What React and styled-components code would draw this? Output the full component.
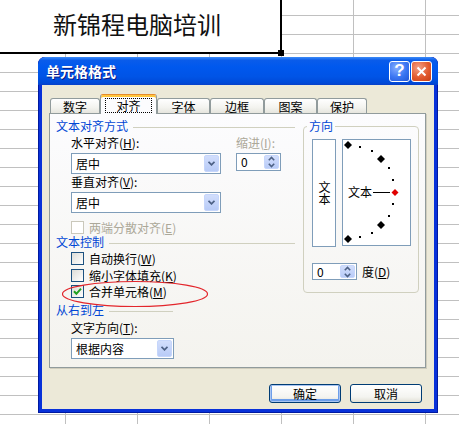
import React from 'react';
import styled, { createGlobalStyle, css } from 'styled-components';

// Page + spreadsheet background
const GlobalStyle = createGlobalStyle`
  html, body {
    margin: 0;
    padding: 0;
  }
  body {
    width: 459px;
    height: 424px;
    overflow: hidden;
    background: #fff;
    font-family: "Noto Sans CJK SC", "Liberation Sans", sans-serif;
  }
`;

const Sheet = styled.div`
  position: relative;
  width: 459px;
  height: 424px;
  overflow: hidden;
  background-color: #fff;
  background-image:
    linear-gradient(to right, transparent 65px, #c0c0c0 65px, #c0c0c0 66px, transparent 66px),
    linear-gradient(to bottom, transparent 15px, #c0c0c0 15px, #c0c0c0 16px, transparent 16px);
  background-size: 72px 100%, 100% 19px;
`;

const MergedCell = styled.div`
  position: relative;
  width: 280px;
  height: 52px;
  box-sizing: content-box;
  padding: 0;
  background: #fff;
  border-right: 2px solid #000;
  border-bottom: 2px solid #000;
  display: flex;
  align-items: center;
  justify-content: center;
  font-size: 24px;
  line-height: 28px;
  color: #111;
  span {
    margin: 0 6px 4px 0;
  }
`;

const FillHandle = styled.i`
  position: absolute;
  right: -4px;
  bottom: -4px;
  width: 6px;
  height: 6px;
  background: #000;
`;

// Window chrome
const Window = styled.div`
  position: absolute;
  left: 38px;
  top: 57px;
  width: 400px;
  height: 356px;
  display: flex;
  flex-direction: column;
  background: #0831d9;
  border-radius: 7px 7px 0 0;
  box-shadow: inset 1px 0 #0019a0, inset -1px 0 #0019a0, inset 0 -1px #0019a0;
  overflow: hidden;
`;

const TitleBar = styled.div`
  height: 28px;
  flex: none;
  display: flex;
  align-items: center;
  gap: 1px;
  padding: 0 6px 0 8px;
  border-radius: 7px 7px 0 0;
  background: linear-gradient(
    to bottom,
    #3d8cf7 0%,
    #0a5cea 12%,
    #0058ee 35%,
    #0054e6 70%,
    #004ad8 92%,
    #0840c8 100%
  );
`;

const Title = styled.div`
  flex: 1;
  color: #fff;
  font-size: 14px;
  font-weight: 700;
  line-height: 18px;
  text-shadow: 1px 1px 0 #0a1883;
`;

const CapButton = styled.span`
  width: 21px;
  height: 21px;
  box-sizing: border-box;
  border: 1px solid #fff;
  border-radius: 3px;
  display: flex;
  align-items: center;
  justify-content: center;
  color: #fff;
  font: 700 17px "Liberation Sans", sans-serif;
  background: ${(p) =>
    p.$close
      ? 'radial-gradient(circle at 35% 30%, #f2a087, #e25a2f 55%, #c63d14)'
      : 'radial-gradient(circle at 35% 30%, #86aeff, #3a75f2 55%, #2356d6)'};
`;

const Body = styled.div`
  flex: 1;
  margin: 0 4px 4px;
  padding: 9px 8px 0 7px;
  background: #ece9d8;
  display: flex;
  flex-direction: column;
`;

// Tabs
const TabList = styled.div`
  position: relative;
  z-index: 1;
  display: flex;
  align-items: flex-end;
  height: 19px;
  margin-left: 1px;
`;

const Tab = styled.div`
  box-sizing: border-box;
  width: ${(p) => p.$w}px;
  height: 15px;
  display: flex;
  align-items: center;
  justify-content: center;
  font-size: 12px;
  line-height: 13px;
  color: #000;
  border: 1px solid #919b9c;
  border-bottom: none;
  border-radius: 3px 3px 0 0;
  background: linear-gradient(#fff, #f3f3ef 60%, #e6e5de);
  ${(p) =>
    p.$active &&
    css`
      height: 20px;
      margin-bottom: -1px;
      padding-top: 2px;
      border-top: 1px solid #e68b2c;
      box-shadow: inset 0 2px 0 #ffc73c;
      background: #fcfcfe;
    `}
`;

const FocusText = styled.span`
  padding: 0 10px;
  border: 1px dotted #000;
  line-height: 13px;
`;

const Panel = styled.div`
  position: relative;
  height: 255px;
  box-sizing: border-box;
  border: 1px solid #919b9c;
  box-shadow: 1px 1px 0 #d0cdbd;
  background: linear-gradient(#fcfcfe, #f4f3ee);
  display: flex;
  gap: 8px;
  padding: 5px 6px 0 6px;
`;

const LeftCol = styled.div`
  width: 239px;
  display: flex;
  flex-direction: column;
`;

const GroupHeader = styled.div`
  display: flex;
  align-items: center;
  height: 14px;
  width: ${(p) => (p.$width ? `${p.$width}px` : 'auto')};
  margin-top: ${(p) => p.$mt || 0}px;
  color: #0046d5;
  font-size: 12px;
  line-height: 14px;
  &::after {
    content: '';
    flex: 1;
    height: 1px;
    margin: 2px 0 0 5px;
    background: #d0d0bf;
  }
`;

const Indent = styled.div`
  padding-left: 15px;
  display: flex;
  flex-direction: ${(p) => (p.$row ? 'row' : 'column')};
  margin-top: ${(p) => p.$mt || 0}px;
`;

const FieldCol = styled.div`
  width: ${(p) => p.$w}px;
  margin-left: ${(p) => p.$ml || 0}px;
  display: flex;
  flex-direction: column;
  align-items: flex-start;
`;

const Label = styled.div`
  height: 14px;
  font-size: 12px;
  line-height: 14px;
  color: ${(p) => (p.$disabled ? '#aca899' : '#000')};
  margin-top: ${(p) => p.$mt || 0}px;
  white-space: nowrap;
`;

const Combo = styled.div`
  box-sizing: border-box;
  width: ${(p) => p.$w}px;
  height: 21px;
  margin-top: 3px;
  border: 1px solid #7f9db9;
  background: #fff;
  display: flex;
  align-items: center;
  padding: 1px 1px 1px 4px;
  font-size: 12px;
`;

const ComboText = styled.span`
  flex: 1;
  line-height: 14px;
`;

const DropButton = styled.span`
  width: 15px;
  height: 17px;
  box-sizing: border-box;
  border: 1px solid #c6d6fb;
  border-radius: 2px;
  background: linear-gradient(#d2defc, #b8cbf7);
  display: flex;
  align-items: center;
  justify-content: center;
`;

const Spinner = styled.div`
  box-sizing: border-box;
  width: 45px;
  height: ${(p) => p.$h || 18}px;
  margin-top: ${(p) => p.$mt || 0}px;
  border: 1px solid #7f9db9;
  background: #fff;
  display: flex;
  align-items: center;
  padding: 1px;
  font-size: 12px;
`;

const SpinText = styled.span`
  flex: 1;
  padding-left: 3px;
  line-height: 14px;
`;

const SpinButton = styled.span`
  width: 15px;
  height: 100%;
  box-sizing: border-box;
  border: 1px solid #c6d6fb;
  border-radius: 2px;
  background: linear-gradient(#d2defc, #b8cbf7);
  display: flex;
  align-items: center;
  justify-content: center;
`;

const CheckRow = styled.div`
  display: flex;
  align-items: center;
  height: 13px;
  margin-top: ${(p) => p.$mt || 0}px;
  font-size: 12px;
  line-height: 13px;
  color: ${(p) => (p.$disabled ? '#aca899' : '#000')};
`;

const CheckBox = styled.span`
  width: 13px;
  height: 13px;
  box-sizing: border-box;
  margin-right: 5px;
  border: 1px solid ${(p) => (p.$disabled ? '#cac8bb' : '#1c5180')};
  background: ${(p) => (p.$disabled ? '#fff' : 'linear-gradient(135deg, #dcdcd7, #fff)')};
  display: flex;
  align-items: center;
  justify-content: center;
`;

// Orientation group
const OrientGroup = styled.fieldset`
  box-sizing: border-box;
  width: 116px;
  height: 174px;
  margin: 0;
  padding: 6px 7px 11px 8px;
  border: 1px solid #d0d0bf;
  border-radius: 4px;
  min-width: 0;
`;

const Legend = styled.legend`
  margin-left: -5px;
  padding: 0 2px;
  color: #0046d5;
  font-size: 12px;
  line-height: 14px;
`;

const DialRow = styled.div`
  display: flex;
  gap: 6px;
  align-items: flex-start;
`;

const VerticalBox = styled.div`
  box-sizing: border-box;
  width: 24px;
  height: 108px;
  border: 1px solid #7f9db9;
  background: #fff;
  display: flex;
  align-items: center;
  justify-content: center;
  font-size: 12px;
  line-height: 12px;
  writing-mode: vertical-rl;
  text-orientation: upright;
`;

const DialBox = styled.div`
  box-sizing: border-box;
  width: 69px;
  height: 107px;
  border: 1px solid #7f9db9;
  background: #fff;
  svg {
    display: block;
  }
`;

const DegreeRow = styled.div`
  display: flex;
  align-items: center;
  margin-top: 16px;
  gap: 5px;
`;

const Annotation = styled.svg`
  position: absolute;
  left: 11px;
  top: 166px;
  pointer-events: none;
`;

// Buttons
const ButtonRow = styled.div`
  display: flex;
  justify-content: flex-end;
  gap: 9px;
  margin-top: 16px;
  padding-right: 4px;
`;

const Button = styled.button`
  width: 72px;
  height: 19px;
  padding: 0;
  border: 1px solid #003c74;
  border-radius: 3px;
  background: linear-gradient(#fff, #f4f4f0 70%, #e3e1d6);
  font-family: "Noto Sans CJK SC", sans-serif;
  font-size: 12px;
  line-height: 14px;
  color: #000;
  ${(p) =>
    p.$default &&
    css`
      box-shadow: inset 0 0 0 1px #a9c5f2, inset 0 -1px 0 2px #6d9ee9;
    `}
`;

const Chevron = () => (
  <svg width="7" height="5" viewBox="0 0 7 5">
    <polyline points="0.5,0.8 3.5,3.8 6.5,0.8" fill="none" stroke="#4d6185" strokeWidth="1.8" />
  </svg>
);

const SpinArrows = () => (
  <svg width="7" height="12" viewBox="0 0 7 12">
    <polyline points="0.8,4.2 3.5,1.5 6.2,4.2" fill="none" stroke="#4d6185" strokeWidth="1.6" />
    <polyline points="0.8,7.8 3.5,10.5 6.2,7.8" fill="none" stroke="#4d6185" strokeWidth="1.6" />
  </svg>
);

const Check = () => (
  <svg width="9" height="9" viewBox="0 0 9 9">
    <polyline points="1,4.2 3.4,6.8 8,1.6" fill="none" stroke="#21a121" strokeWidth="2" />
  </svg>
);

const diamond = (x, y, r) => `${x},${y - r} ${x + r},${y} ${x},${y + r} ${x - r},${y}`;

const bigMarks = [
  [5, 5],
  [38, 19],
  [38, 85],
  [5, 99],
];

const smallDots = [
  [17, 7],
  [29, 11],
  [46, 28],
  [50, 40],
  [50, 64],
  [46, 76],
  [29, 93],
  [17, 97],
];

const Dial = () => (
  <DialBox>
    <svg width="67" height="105" viewBox="0 0 67 105">
      {bigMarks.map(([x, y]) => (
        <polygon key={`${x}-${y}`} points={diamond(x, y, 4)} fill="#000" />
      ))}
      {smallDots.map(([x, y]) => (
        <rect key={`${x}-${y}`} x={x - 1} y={y - 1} width="2" height="2" fill="#000" />
      ))}
      <text x="5" y="57" fontSize="12" fontFamily="Noto Sans CJK SC, sans-serif" fill="#000">
        文本
      </text>
      <line x1="30" y1="52.5" x2="47" y2="52.5" stroke="#000" strokeWidth="1" />
      <polygon points={diamond(52, 52.5, 3.5)} fill="#e00000" />
    </svg>
  </DialBox>
);

const Key = ({ k }) => (
  <>
    (<u>{k}</u>)
  </>
);

export default function App() {
  return (
    <>
      <GlobalStyle />
      <Sheet>
        <MergedCell>
          <span>新锦程电脑培训</span>
          <FillHandle />
        </MergedCell>

        <Window>
          <TitleBar>
            <Title>单元格格式</Title>
            <CapButton>?</CapButton>
            <CapButton $close>
              <svg width="11" height="11" viewBox="0 0 11 11">
                <path d="M1.5 1.5 L9.5 9.5 M9.5 1.5 L1.5 9.5" stroke="#fff" strokeWidth="2" />
              </svg>
            </CapButton>
          </TitleBar>

          <Body>
            <TabList>
              <Tab $w={50}>数字</Tab>
              <Tab $w={57} $active>
                <FocusText>对齐</FocusText>
              </Tab>
              <Tab $w={53}>字体</Tab>
              <Tab $w={54}>边框</Tab>
              <Tab $w={53}>图案</Tab>
              <Tab $w={50}>保护</Tab>
            </TabList>

            <Panel>
              <LeftCol>
                <GroupHeader>文本对齐方式</GroupHeader>
                <Indent $row>
                  <FieldCol $w={150}>
                    <Label $mt={3}>
                      水平对齐<Key k="H" />:
                    </Label>
                    <Combo $w={150}>
                      <ComboText>居中</ComboText>
                      <DropButton>
                        <Chevron />
                      </DropButton>
                    </Combo>
                    <Label $mt={1}>
                      垂直对齐<Key k="V" />:
                    </Label>
                    <Combo $w={150}>
                      <ComboText>居中</ComboText>
                      <DropButton>
                        <Chevron />
                      </DropButton>
                    </Combo>
                    <CheckRow $disabled $mt={8}>
                      <CheckBox $disabled />
                      两端分散对齐<Key k="E" />
                    </CheckRow>
                  </FieldCol>
                  <FieldCol $w={50} $ml={15}>
                    <Label $mt={3} $disabled>
                      缩进<Key k="I" />:
                    </Label>
                    <Spinner $mt={3}>
                      <SpinText>0</SpinText>
                      <SpinButton>
                        <SpinArrows />
                      </SpinButton>
                    </Spinner>
                  </FieldCol>
                </Indent>

                <GroupHeader $mt={1}>文本控制</GroupHeader>
                <Indent $mt={3}>
                  <CheckRow>
                    <CheckBox />
                    自动换行<Key k="W" />
                  </CheckRow>
                  <CheckRow $mt={4}>
                    <CheckBox />
                    缩小字体填充<Key k="K" />
                  </CheckRow>
                  <CheckRow $mt={3}>
                    <CheckBox>
                      <Check />
                    </CheckBox>
                    合并单元格<Key k="M" />
                  </CheckRow>
                </Indent>

                <GroupHeader $mt={5} $width={117}>
                  从右到左
                </GroupHeader>
                <Indent>
                  <Label $mt={4}>
                    文字方向<Key k="T" />:
                  </Label>
                  <Combo $w={103}>
                    <ComboText>根据内容</ComboText>
                    <DropButton>
                      <Chevron />
                    </DropButton>
                  </Combo>
                </Indent>
              </LeftCol>

              <OrientGroup>
                <Legend>方向</Legend>
                <DialRow>
                  <VerticalBox>文本</VerticalBox>
                  <Dial />
                </DialRow>
                <DegreeRow>
                  <Spinner $h={17}>
                    <SpinText>0</SpinText>
                    <SpinButton>
                      <SpinArrows />
                    </SpinButton>
                  </Spinner>
                  <Label>
                    度<Key k="D" />
                  </Label>
                </DegreeRow>
              </OrientGroup>

              <Annotation width="148" height="28" viewBox="0 0 148 28">
                <ellipse cx="74" cy="14" rx="72.5" ry="12.5" fill="none" stroke="#e3262c" strokeWidth="1.2" />
              </Annotation>
            </Panel>

            <ButtonRow>
              <Button $default>确定</Button>
              <Button>取消</Button>
            </ButtonRow>
          </Body>
        </Window>
      </Sheet>
    </>
  );
}
